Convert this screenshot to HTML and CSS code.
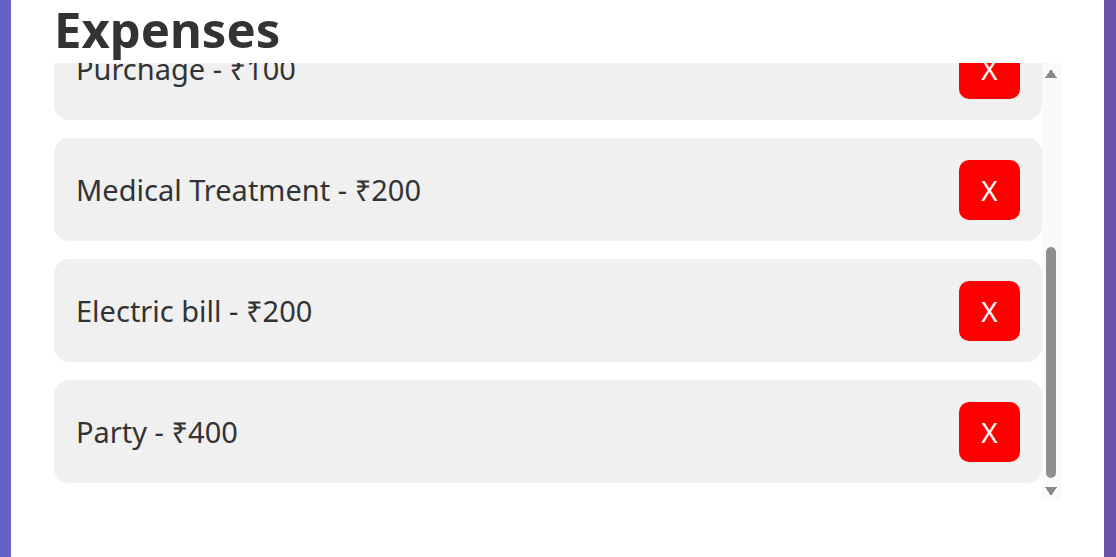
FILE: index.html
```html
<!DOCTYPE html>
<html lang="en">
<head>
<meta charset="utf-8">
<title>Expenses</title>
<link rel="stylesheet" href="styles.css">
</head>
<body>
<main class="card">
  <h1 class="title">Expenses</h1>
  <div class="list-wrap">
    <div class="list">
      <div class="list-inner">
        <div class="item"><span class="label">Groceries - ₹150</span><button class="del">X</button></div>
        <div class="item"><span class="label">Rent - ₹300</span><button class="del">X</button></div>
        <div class="item"><span class="label">Purchage - ₹100</span><button class="del">X</button></div>
        <div class="item"><span class="label">Medical Treatment - ₹200</span><button class="del">X</button></div>
        <div class="item"><span class="label">Electric bill - ₹200</span><button class="del">X</button></div>
        <div class="item"><span class="label">Party - ₹400</span><button class="del">X</button></div>
      </div>
    </div>
    <div class="scrollbar" aria-hidden="true">
      <div class="sb-btn sb-up"></div>
      <div class="sb-track"><div class="sb-thumb"></div></div>
      <div class="sb-btn sb-down"></div>
    </div>
  </div>
</main>
</body>
</html>
```
FILE: styles.css
```css
html, body {
  margin: 0;
  height: 100%;
}
body {
  background: linear-gradient(to right, #6561c6, #6953a9);
  font-family: "Noto Sans", "Open Sans", "DejaVu Sans", sans-serif;
  overflow: hidden;
}
.card {
  box-sizing: border-box;
  margin: 0 12px 0 11px;
  height: 100%;
  background: #ffffff;
  padding: 3px 43px 0 43px;
}
.title {
  margin: 0 0 8px 0;
  font-size: 49px;
  line-height: 52px;
  font-weight: 700;
  color: #333333;
}
.list-wrap {
  display: flex;
  height: 437px;
}
.list {
  flex: 1;
  min-width: 0;
  overflow-y: scroll;
  scrollbar-width: none;
  display: flex;
  flex-direction: column-reverse;
}
.list-inner {
  flex: none;
}
.item {
  box-sizing: border-box;
  height: 103px;
  margin-bottom: 18px;
  padding: 0 22px;
  background: #f0f0f0;
  border-radius: 15px;
  display: flex;
  align-items: center;
  justify-content: space-between;
}
.item:last-child {
  margin-bottom: 17px;
}
.label {
  font-size: 29px;
  color: #333333;
}
.del {
  width: 61px;
  height: 60px;
  border: none;
  border-radius: 10px;
  background: #ff0000;
  color: #ffffff;
  font-family: "Noto Sans", "Open Sans", sans-serif;
  font-size: 28px;
  padding: 0;
}
.scrollbar {
  width: 19px;
  flex: none;
  background: #fafafa;
  display: flex;
  flex-direction: column;
}
.sb-btn {
  height: 18px;
  flex: none;
  background-repeat: no-repeat;
}
.sb-up {
  background-image:
    linear-gradient(to bottom right, transparent 50%, #8a8a8a 50%),
    linear-gradient(to bottom left, transparent 50%, #8a8a8a 50%);
  background-size: 6px 9px, 6px 9px;
  background-position: 3px 6px, 9px 6px;
}
.sb-down {
  background-image:
    linear-gradient(to top right, transparent 50%, #8a8a8a 50%),
    linear-gradient(to top left, transparent 50%, #8a8a8a 50%);
  background-size: 6px 9px, 6px 9px;
  background-position: 3px 5px, 9px 5px;
}
.sb-track {
  flex: 1;
  display: flex;
  flex-direction: column;
  justify-content: flex-end;
  padding: 0 5px 4px 4px;
}
.sb-thumb {
  height: 231px;
  background: #8f8f8f;
  border-radius: 5px;
}
```
